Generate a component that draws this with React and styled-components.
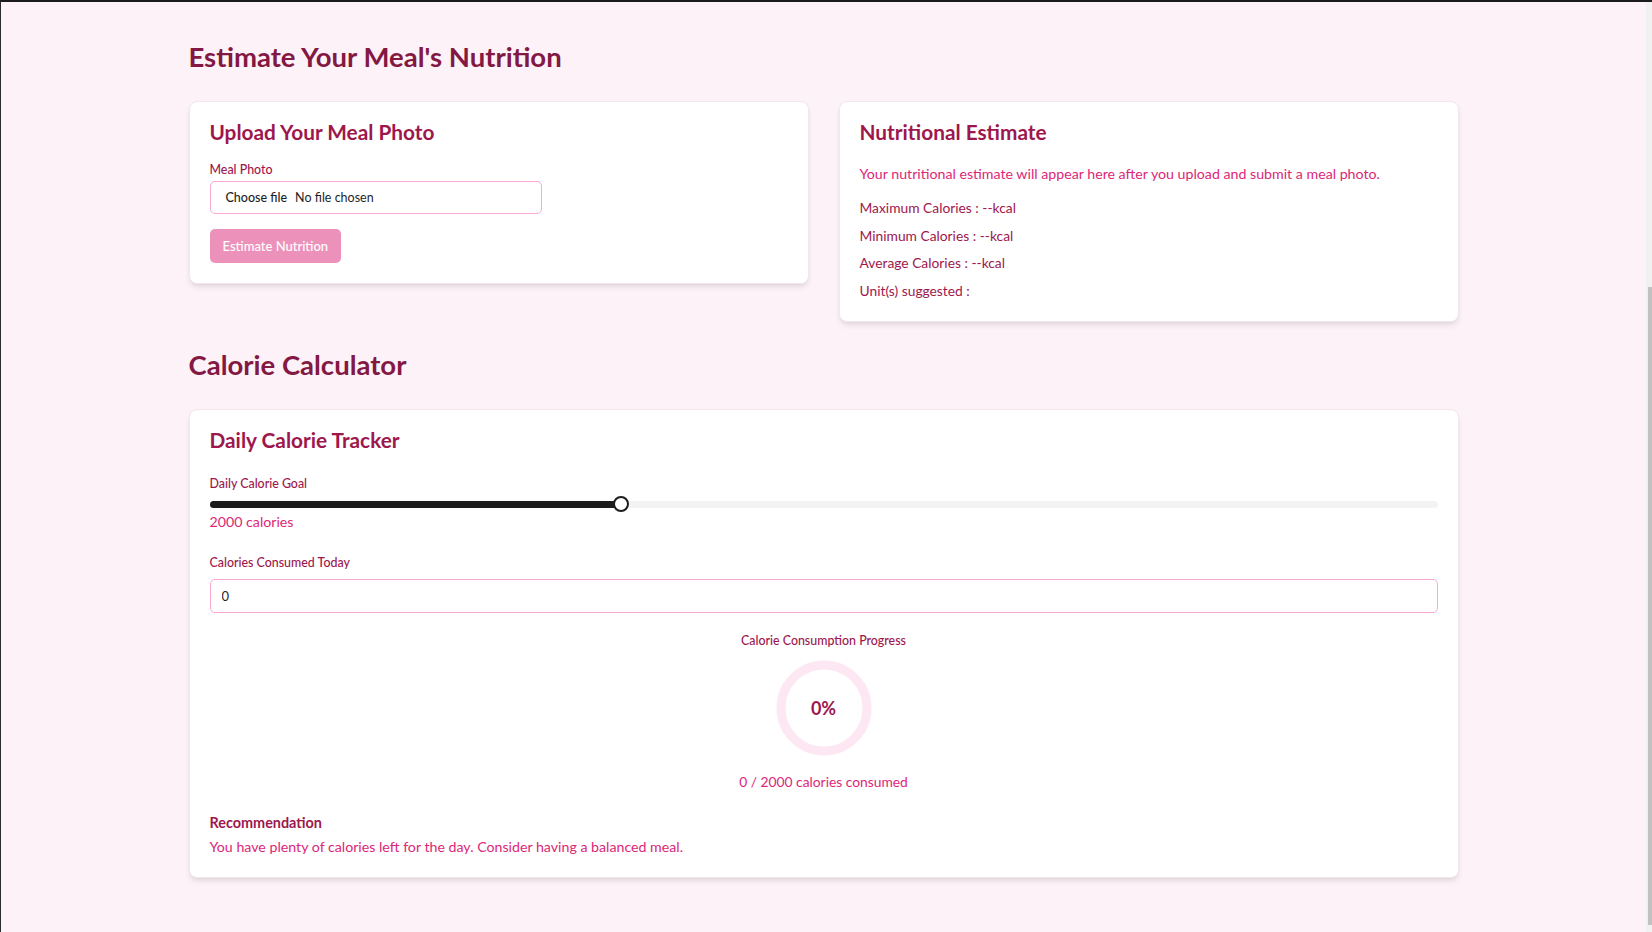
import React from 'react';
import styled, { createGlobalStyle } from 'styled-components';

const GlobalStyle = createGlobalStyle`
	* {
		box-sizing: border-box;
	}
	body {
		margin: 0;
		background: #fdf2f8;
		font-family: Lato, 'Open Sans', sans-serif;
		color: #9d174d;
	}
`;

const Frame = styled.div`
	display: flex;
	height: 100vh;
	border-top: 2px solid #1b1b1b;
	border-left: 1px solid #2b2b2b;
	overflow: hidden;
`;

const Main = styled.main`
	flex: 1;
	padding-top: 37px;
`;

const ScrollTrack = styled.div`
	width: 6px;
	background: #f1f1f1;
	display: flex;
	flex-direction: column;
	align-items: flex-end;
`;

const ScrollThumb = styled.div`
	width: 4px;
	height: 638px;
	margin-top: 285px;
	background: #c1c1c1;
`;

const Container = styled.div`
	width: 1270px;
	margin: 0 auto;
`;

const Section = styled.section`
	margin-bottom: 25px;
`;

const SectionTitle = styled.h1`
	margin: 0 0 26px;
	font-size: 27.5px;
	line-height: 36px;
	font-weight: 700;
	color: #831843;
`;

const TwoCols = styled.div`
	display: grid;
	grid-template-columns: 1fr 1fr;
	gap: 30px;
	align-items: start;
`;

const Card = styled.div`
	background: #fff;
	border: 1px solid #f3e6ed;
	border-radius: 8px;
	box-shadow: 0 4px 6px -1px rgba(0, 0, 0, 0.09), 0 2px 4px -2px rgba(0, 0, 0, 0.08);
	padding: 20px;
`;

const CardTitle = styled.h2`
	margin: 0 0 ${(p) => p.$gap || 18}px;
	font-size: 20.8px;
	line-height: 20px;
	font-weight: 700;
	color: #9d174d;
`;

const Label = styled.div`
	font-size: 12.4px;
	line-height: 20px;
	font-weight: 500;
	color: #9d174d;
	margin-bottom: ${(p) => p.$gap ?? 1}px;
`;

const FileField = styled.div`
	width: 332px;
	height: 33px;
	display: flex;
	align-items: center;
	gap: 8px;
	padding: 0 15px;
	border: 1px solid #f9a8d4;
	border-radius: 5px;
	font-size: 12.5px;
	color: #1f1f1f;
`;

const FileButton = styled.span`
	font-weight: 500;
`;

const Button = styled.button`
	margin-top: 15px;
	height: 34px;
	padding: 0 13px;
	border: none;
	border-radius: 5px;
	background: #db2777;
	opacity: 0.5;
	color: #fff;
	font-family: inherit;
	font-size: 13px;
	font-weight: 500;
	cursor: not-allowed;
`;

const Text = styled.p`
	margin: 0;
	font-size: ${(p) => p.$size || (p.$accent ? 14.2 : 13.8)}px;
	line-height: 20px;
	color: ${(p) => (p.$accent ? '#db2777' : '#9d174d')};
`;

const StatList = styled.div`
	margin-top: 14px;
	display: flex;
	flex-direction: column;
	gap: 7.7px;
`;

const SliderRoot = styled.div`
	position: relative;
	height: 16px;
	display: flex;
	align-items: center;
`;

const SliderTrack = styled.div`
	width: 100%;
	height: 7px;
	border-radius: 4px;
	background: #f3f3f3;
	overflow: hidden;
`;

const SliderRange = styled.div`
	height: 100%;
	background: #1c1c1c;
`;

const SliderThumb = styled.div`
	position: absolute;
	top: 0;
	width: 16px;
	height: 16px;
	border-radius: 50%;
	background: #fff;
	border: 2px solid #1c1c1c;
`;

const ConsumedLabel = styled(Label)`
	margin-top: 21px;
`;

const NumberInput = styled.input`
	display: block;
	width: 100%;
	height: 34px;
	margin-top: 6px;
	padding: 0 11px;
	border: 1px solid #f9a8d4;
	border-radius: 5px;
	font-family: inherit;
	font-size: 13px;
	color: #1f1f1f;
	outline: none;
`;

const Progress = styled.div`
	margin-top: 17.5px;
	display: flex;
	flex-direction: column;
	align-items: center;
`;

const Ring = styled.div`
	display: grid;
	place-items: center;
	width: 96px;
	height: 96px;
	margin: 8px 0 16px;

	& > * {
		grid-area: 1 / 1;
	}
`;

const RingValue = styled.span`
	font-size: 18px;
	font-weight: 700;
	color: #9d174d;
`;

const Recommendation = styled.div`
	margin-top: 21px;
`;

const RecTitle = styled.h3`
	margin: 0 0 4px;
	font-size: 14.4px;
	line-height: 20px;
	font-weight: 700;
	color: #9d174d;
`;

const MIN = 1000;
const MAX = 4000;

const CalorieSlider = ({ value }) => {
	const ratio = (value - MIN) / (MAX - MIN);
	return (
		<SliderRoot>
			<SliderTrack>
				<SliderRange style={{ width: `calc(8px + (100% - 16px) * ${ratio})` }} />
			</SliderTrack>
			<SliderThumb style={{ left: `calc((100% - 16px) * ${ratio})` }} />
		</SliderRoot>
	);
};

const App = () => {
	const goal = 2000;
	const consumed = 0;
	const pct = Math.round((consumed / goal) * 100);

	return (
		<>
			<GlobalStyle />
			<Frame>
				<Main>
					<Container>
						<Section>
							<SectionTitle>Estimate Your Meal's Nutrition</SectionTitle>
							<TwoCols>
								<Card>
									<CardTitle>Upload Your Meal Photo</CardTitle>
									<Label>Meal Photo</Label>
									<FileField>
										<FileButton>Choose file</FileButton>
										<span>No file chosen</span>
									</FileField>
									<Button disabled>Estimate Nutrition</Button>
								</Card>
								<Card>
									<CardTitle $gap={22}>Nutritional Estimate</CardTitle>
									<Text $accent>
										Your nutritional estimate will appear here after you upload and submit a meal photo.
									</Text>
									<StatList>
										<Text>Maximum Calories : --kcal</Text>
										<Text>Minimum Calories : --kcal</Text>
										<Text>Average Calories : --kcal</Text>
										<Text>Unit(s) suggested :</Text>
									</StatList>
								</Card>
							</TwoCols>
						</Section>

						<Section>
							<SectionTitle>Calorie Calculator</SectionTitle>
							<Card>
								<CardTitle $gap={24}>Daily Calorie Tracker</CardTitle>
								<Label $gap={2}>Daily Calorie Goal</Label>
								<CalorieSlider value={goal} />
								<Text $accent>{goal} calories</Text>
								<ConsumedLabel>Calories Consumed Today</ConsumedLabel>
								<NumberInput type="number" defaultValue={consumed} />
								<Progress>
									<Label>Calorie Consumption Progress</Label>
									<Ring>
										<svg width="96" height="96" viewBox="0 0 96 96">
											<circle cx="48" cy="48" r="43" fill="none" stroke="#fce7f3" strokeWidth="9" />
										</svg>
										<RingValue>{pct}%</RingValue>
									</Ring>
									<Text $accent $size={13.8}>
										{consumed} / {goal} calories consumed
									</Text>
								</Progress>
								<Recommendation>
									<RecTitle>Recommendation</RecTitle>
									<Text $accent>
										You have plenty of calories left for the day. Consider having a balanced meal.
									</Text>
								</Recommendation>
							</Card>
						</Section>
					</Container>
				</Main>
				<ScrollTrack>
					<ScrollThumb />
				</ScrollTrack>
			</Frame>
		</>
	);
};

export default App;
